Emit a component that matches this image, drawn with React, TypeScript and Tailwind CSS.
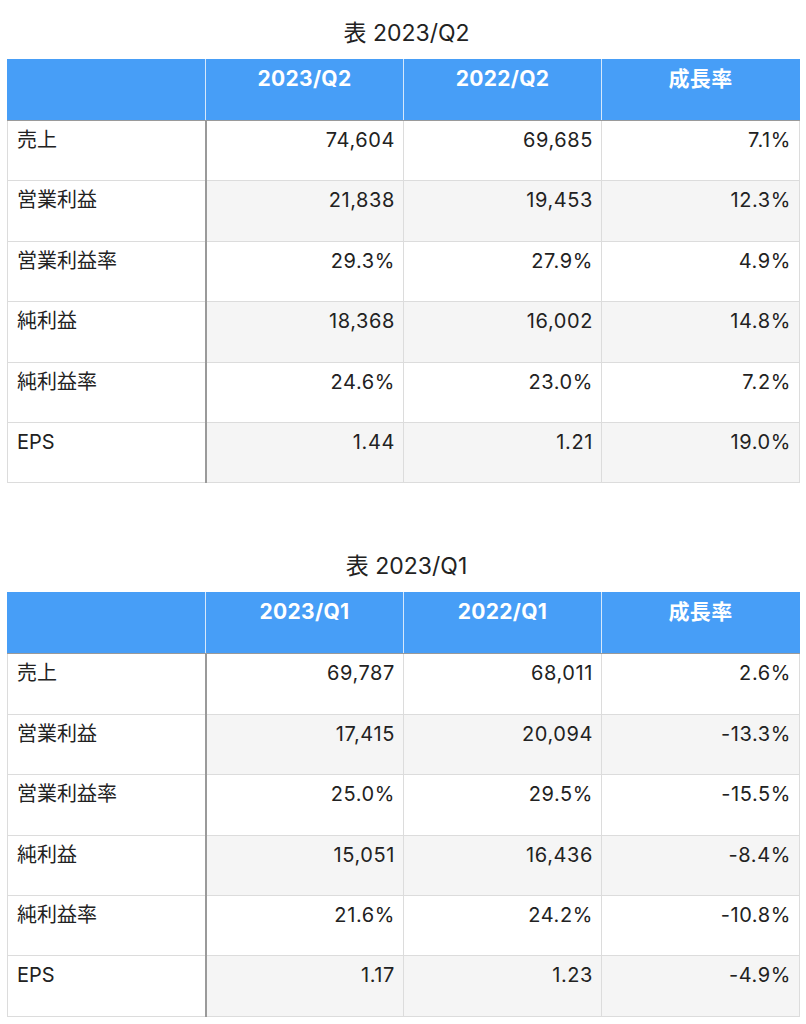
import React from "react";

type Row = [string, string, string, string];

const t1: Row[] = [
  ["売上", "74,604", "69,685", "7.1%"],
  ["営業利益", "21,838", "19,453", "12.3%"],
  ["営業利益率", "29.3%", "27.9%", "4.9%"],
  ["純利益", "18,368", "16,002", "14.8%"],
  ["純利益率", "24.6%", "23.0%", "7.2%"],
  ["EPS", "1.44", "1.21", "19.0%"],
];

const t2: Row[] = [
  ["売上", "69,787", "68,011", "2.6%"],
  ["営業利益", "17,415", "20,094", "-13.3%"],
  ["営業利益率", "25.0%", "29.5%", "-15.5%"],
  ["純利益", "15,051", "16,436", "-8.4%"],
  ["純利益率", "21.6%", "24.2%", "-10.8%"],
  ["EPS", "1.17", "1.23", "-4.9%"],
];

function Table({ title, cols, rows }: { title: string; cols: string[]; rows: Row[] }) {
  return (
    <div>
      <div className="h-[32px] text-center text-[23px] leading-[32px] text-[#222]">{title}</div>
      <table className="mt-[10px] w-[793px] table-fixed border-collapse text-[20px] leading-[24px] text-[#222]">
        <thead>
          <tr className="h-[61px] bg-[#479ef7]">
            <th className="border border-[#479ef7] border-b-[#9a9a9a] border-r-[#d6e8fb]"></th>
            {cols.map((c, i) => (
              <th
                key={c}
                className={`border border-[#479ef7] border-b-[#9a9a9a] ${i < 2 ? "border-r-[#d6e8fb]" : ""} pt-[7px] pb-[29px] align-top text-center text-[21px] font-bold tracking-[0.3px] text-white`}
              >
                {c}
              </th>
            ))}
          </tr>
        </thead>
        <tbody>
          {rows.map((r, ri) => (
            <tr key={r[0]} className="h-[60.4px]">
              <td className="border border-[#dcdcdc] border-r-[#9a9a9a] border-r-2 bg-white pl-[9px] pt-[7px] align-top">
                {r[0]}
              </td>
              {r.slice(1).map((v, ci) => (
                <td
                  key={ci}
                  className={`border border-[#dcdcdc] pr-[8px] pt-[7px] align-top text-right tracking-[0.6px] ${ri % 2 === 1 ? "bg-[#f5f5f5]" : "bg-white"}`}
                >
                  {v}
                </td>
              ))}
            </tr>
          ))}
        </tbody>
      </table>
    </div>
  );
}

export default function App() {
  return (
    <div
      className="min-h-[1024px] w-[806px] bg-white pl-[7px] pt-[17px]"
      style={{ fontFamily: 'Inter, "Noto Sans CJK JP", sans-serif' }}
    >
      <Table title="表 2023/Q2" cols={["2023/Q2", "2022/Q2", "成長率"]} rows={t1} />
      <div className="h-[67px]" />
      <Table title="表 2023/Q1" cols={["2023/Q1", "2022/Q1", "成長率"]} rows={t2} />
    </div>
  );
}
